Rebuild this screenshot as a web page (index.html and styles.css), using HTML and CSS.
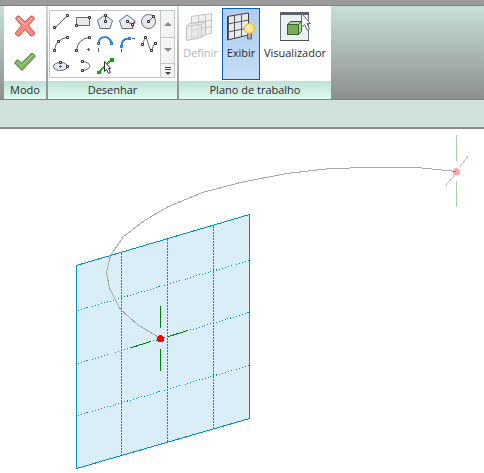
FILE: index.html
```html
<!DOCTYPE html>
<html lang="pt-br">
<head>
    <meta charset="UTF-8">
    <meta name="viewport" content="width=device-width, initial-scale=1.0">
    <title>Plano de trabalho</title>
    <link rel="stylesheet" href="styles.css">
</head>
<body>
    <div class="tabs-edge"></div>
    <div class="ribbon">
        <section class="panel panel-mode">
            <div class="panel-body">
                <button type="button" class="mode-button" aria-label="Cancelar">
                    <svg width="24" height="24" viewBox="0 0 24 24">
                        <path d="M2.500 4.500L4.500 2H6L12 8L18 2H19.500L21.500 4.500L15.500 11.500L21.500 19V20L19.500 22H18L12 15.500L6 22H4.500L2.500 20V19L8.500 11.500Z" fill="#ff8a82" stroke="#cf4a40"/>
                        <path d="M5 4L12 11L19 4" fill="none" stroke="#ffb8b2"/>
                    </svg>
                </button>
                <button type="button" class="mode-button" aria-label="Concluir">
                    <svg width="24" height="24" viewBox="0 0 24 24">
                        <path d="M1.500 13L4.500 9.500L8.500 13L19 3L22.500 6L9 20.500Z" fill="#82b565" stroke="#4d7d38"/>
                        <path d="M4 12L8.500 16L20 5" fill="none" stroke="#a4d088"/>
                    </svg>
                </button>
            </div>
            <h2>Modo</h2>
        </section>
        <section class="panel panel-draw">
            <div class="panel-body">
                <div class="gallery">
                    <div class="tools">
                        <button type="button" aria-label="Linha">
                            <svg viewBox="0 0 22 22"><path d="M5 17L17 5"/><g class="node"><path d="M3.500 15.500h2v2h-2zM16.500 3.500h2v2h-2z"/></g></svg>
                        </button>
                        <button type="button" aria-label="Retângulo">
                            <svg viewBox="0 0 22 22"><path class="solid" d="M4.500 6.500h13v8h-13z"/><g class="node"><path d="M3.500 13.500h2v2h-2zM16.500 5.500h2v2h-2z"/></g></svg>
                        </button>
                        <button type="button" aria-label="Polígono inscrito">
                            <svg viewBox="0 0 22 22"><path class="solid" d="M11 4L18.500 9.500L16 17.500H6L3.500 9.500Z"/><path d="M11.500 6v5"/><g class="node"><path d="M10.500 3.500h2v2h-2zM10.500 9.500h2v2h-2z"/></g></svg>
                        </button>
                        <button type="button" aria-label="Polígono circunscrito">
                            <svg viewBox="0 0 22 22"><path class="solid" d="M11 4L18.500 9.500L16 17.500H6L3.500 9.500Z"/><path class="red" d="M19 10L16 18"/><path d="M12 11L16 13"/><g class="node"><path d="M10.500 9.500h2v2h-2zM15.500 12.500h2v2h-2z"/></g></svg>
                        </button>
                        <button type="button" aria-label="Círculo">
                            <svg viewBox="0 0 22 22"><circle class="solid" cx="10.500" cy="10.500" r="7"/><path d="M11 10L15 6"/><g class="node"><path d="M9.500 9.500h2v2h-2zM14.500 4.500h2v2h-2z"/></g></svg>
                        </button>
                        <button type="button" aria-label="Arco por três pontos">
                            <svg viewBox="0 0 22 22"><path d="M4.500 17Q6 6 17 4.500"/><g class="node"><path d="M3.500 16.500h2v2h-2zM7.500 7.500h2v2h-2zM16.500 3.500h2v2h-2z"/></g></svg>
                        </button>
                        <button type="button" aria-label="Arco por centro">
                            <svg viewBox="0 0 22 22"><path d="M4.500 17Q6 6 17 4.500M15 16.500h3M16.500 15v3"/><g class="node"><path d="M3.500 16.500h2v2h-2zM16.500 3.500h2v2h-2z"/></g></svg>
                        </button>
                        <button type="button" aria-label="Arco tangente">
                            <svg viewBox="0 0 22 22"><path class="blue" d="M4.500 11C5 2 15 2 17.500 10"/><path d="M4.500 15v4"/><g class="blue-node"><path d="M3.500 9.500h2v2h-2zM16.500 9.500h2v2h-2z"/></g></svg>
                        </button>
                        <button type="button" aria-label="Arco de concordância">
                            <svg viewBox="0 0 22 22"><path class="blue" d="M5.500 13C5.500 8 8 5.500 13 5.500"/><path d="M16 5.500h3M5.500 16v3"/><g class="blue-node"><path d="M4.500 12.500h2v2h-2zM12.500 4.500h2v2h-2z"/></g></svg>
                        </button>
                        <button type="button" aria-label="Spline">
                            <svg viewBox="0 0 22 22"><path d="M4.500 11C6 9 6 5 8 5.500C10 7 11 17 13.500 16.500C15 16 15 11 17.500 10"/><g class="node"><path d="M3.500 10.500h2v2h-2zM6.500 3.500h2v2h-2zM12.500 16.500h2v2h-2zM16.500 9.500h2v2h-2z"/></g></svg>
                        </button>
                        <button type="button" aria-label="Elipse">
                            <svg viewBox="0 0 22 22"><ellipse class="solid" cx="10.500" cy="11.500" rx="7" ry="4"/><path d="M9 11.500h3M10.500 10v3"/><g class="node"><path d="M9.500 6.500h2v2h-2zM16.500 10.500h2v2h-2z"/></g></svg>
                        </button>
                        <button type="button" aria-label="Elipse parcial">
                            <svg viewBox="0 0 22 22"><path d="M11 6.500C20 8 20 14 11 15.500"/><g class="node"><path d="M9.500 5.500h2v2h-2zM9.500 14.500h2v2h-2z"/></g></svg>
                        </button>
                        <button type="button" aria-label="Selecionar linhas">
                            <svg viewBox="0 0 22 22"><path class="green" d="M5 17L17 5"/><path class="green-node" d="M3 16h4v3h-4zM16 3h4v4h-4z"/><path class="cursor" d="M10.500 6.500v10l2-2l2 4l2-1l-2-4h2z"/></svg>
                        </button>
                    </div>
                    <div class="scroller">
                        <button type="button" aria-label="Para cima"><svg viewBox="0 0 12 12"><path d="M2 8L6 4L10 8Z"/></svg></button>
                        <button type="button" aria-label="Para baixo"><svg viewBox="0 0 12 12"><path d="M2 4L6 8L10 4Z"/></svg></button>
                        <button type="button" class="more" aria-label="Mais"><svg viewBox="0 0 12 12"><path d="M3 2h6v1h-6zM3 4h6v1h-6zM3 7L6 10L9 7Z"/></svg></button>
                    </div>
                </div>
            </div>
            <h2>Desenhar</h2>
        </section>
        <section class="panel panel-plane">
            <div class="panel-body">
                <button type="button" class="large-button" disabled>
                    <svg width="32" height="32" viewBox="0 0 32 32">
                        <path d="M6.500 5.500L26.500 2.500V22L6.500 27Z" fill="#f0f0f0" stroke="#c4c4c4"/>
                        <path d="M13.500 5v20M20.500 4v19M6.500 12.500L26.500 9M6.500 19.500L26.500 15.500" fill="none" stroke="#c4c4c4"/>
                        <path d="M1.500 15.500L5 12.500L20.500 10.500V22.500L16.500 26.500L1.500 29.500Z" fill="#e2e2e2" fill-opacity=".6" stroke="#bdbdbd"/>
                        <path d="M1.500 15.500L16.500 13.500L20.500 10.500M16.500 13.500V26" fill="none" stroke="#c8c8c8"/>
                    </svg>
                    <span>Definir</span>
                </button>
                <button type="button" class="large-button active">
                    <svg width="32" height="32" viewBox="0 0 32 32">
                        <path d="M2.500 5.500L23.500 2V24L2.500 29Z" fill="#e6e9ee" stroke="#3c3c3c"/>
                        <path d="M3.500 6L3.500 28M9.500 5v22M16.500 4v21M2.500 13L23.500 9M2.500 21L23.500 17" fill="none" stroke="#5a5a5a"/>
                        <path d="M22.500 22h4v6h-4z" fill="#aaa" stroke="#666"/>
                        <circle cx="24.500" cy="17.500" r="5" fill="#ffe685" stroke="#eeb02c"/>
                        <circle cx="23" cy="16" r="2" fill="#fff6c8"/>
                    </svg>
                    <span>Exibir</span>
                </button>
                <button type="button" class="large-button">
                    <svg width="32" height="32" viewBox="0 0 32 32">
                        <path d="M1.500 1.500h28v28h-28z" fill="#edf0f3" stroke="#6a6f7a"/>
                        <path d="M1 1h29v3h-29z" fill="#5a5f6b"/>
                        <path d="M1 29h29v1h-29z" fill="#4a4f5b"/>
                        <path d="M8.500 13.500L11.500 10.500H22.500V20.500L19.500 23.500H8.500Z" fill="#b0d69a" stroke="#35632c"/>
                        <path d="M8.500 13.500H19.500V23.500H8.500Z" fill="#76ac5a" stroke="#35632c"/>
                        <path d="M19.500 13.500L22.500 10.500" stroke="#35632c"/>
                        <path d="M22.500 2.500V16.500L25.500 13.500L28.500 19.500L30.500 18L28 12.500H31.500Z" fill="#f4f4f4" stroke="#6a6a6a"/>
                    </svg>
                    <span>Visualizador</span>
                </button>
            </div>
            <h2>Plano de trabalho</h2>
        </section>
    </div>
    <div class="options-bar"></div>
    <main class="view">
        <svg class="drawing" viewBox="0 129 484 344" role="img" aria-label="Caminho e plano de trabalho">
            <!-- plano -->
            <path class="plane" d="M76.500 265.500L249.500 214.500V418.500L76.500 468.500Z"/>
            <path class="grid" d="M121.500 253V455M167.500 239V442M213.500 226V429"/>
            <path class="grid-slope" d="M78 310.500L249 260.500M78 363.500L249 312.500M78 415.500L249 365.500"/>
            <!-- caminho -->
            <path class="path" d="M160.500 338.500L137.500 324.500L120.500 309.500L109.500 288.500L106.500 272.500L110.500 255.500L123.500 236.500L144.500 220.500L168.500 206.500L202.500 192.500L240.500 182.500L286.500 173.500L330.500 168.500L370.500 167.500L417.500 167.500L456.500 171.500"/>
            <path class="axis" d="M160.500 306V328M160.500 349V371M131 347.500L151 341.500M168 336.500L188 330.500"/>
            <circle class="point" cx="160.500" cy="338.500" r="3.500"/>
            <g class="faded">
                <path class="axis" d="M456.500 135V161M456.500 181V207M446 185.500L454 175.500M460 166.500L468 156.500"/>
                <circle class="point" cx="456.500" cy="171.500" r="3.500"/>
            </g>
        </svg>
    </main>
</body>
</html>
```
FILE: styles.css
```css
* {
    box-sizing: border-box;
}
body {
    margin: 0;
    min-height: 100vh;
    display: flex;
    flex-direction: column;
    background-color: #fff;
    font-family: "Open Sans", "Noto Sans", sans-serif;
    font-size: 11px;
    color: #2b2b2b;
}
button {
    margin: 0;
    padding: 0;
    border: none;
    background: none;
    font: inherit;
    color: inherit;
}
svg {
    display: block;
}
.tabs-edge {
    height: 5px;
    background-color: #9b9b9b;
}
.ribbon {
    display: flex;
    gap: 2px;
    height: 95px;
    padding-left: 4px;
    border-top: 1px solid #22b573;
    border-bottom: 1px solid #22b573;
    background: linear-gradient(#c8dfd6, #8c8f8e);
}
.panel {
    display: flex;
    flex-direction: column;
    background-color: #fff;
}
.panel-mode {
    width: 42px;
}
.panel-draw {
    width: 129px;
}
.panel-plane {
    width: 152px;
}
.panel-body {
    flex: 1;
    display: flex;
}
.panel h2 {
    margin: 0;
    height: 18px;
    font-size: 11px;
    font-weight: 400;
    line-height: 18px;
    text-align: center;
    background: linear-gradient(#bfe0d5, #dffbf1);
}
.panel-mode .panel-body {
    flex-direction: column;
    align-items: center;
    gap: 12px;
    padding-top: 8px;
}
.gallery {
    display: flex;
    height: 68px;
    margin: 4px 0 0 1px;
    border: 1px solid #c4c8c8;
}
.tools {
    display: grid;
    grid-template-columns: repeat(5, 22px);
    grid-auto-rows: 22px;
}
.tools svg {
    width: 22px;
    height: 22px;
    fill: none;
    stroke: #5a5e68;
}
.tools .solid {
    fill: #e6e9ed;
    stroke: #666b76;
}
.tools .node {
    fill: #fff;
    stroke: #2c2c30;
}
.tools .red {
    stroke: #f00;
    stroke-dasharray: 3 1;
}
.tools .blue {
    stroke: #2a84d2;
    stroke-width: 2;
}
.tools .blue-node {
    fill: #9ccbf2;
    stroke: #0e6ac0;
}
.tools .green {
    stroke: #1eb414;
    stroke-width: 2;
}
.tools .green-node {
    fill: #0ca808;
    stroke: none;
}
.tools .cursor {
    fill: #fff;
    stroke: #333;
}
.scroller {
    width: 14px;
    display: flex;
    flex-direction: column;
}
.scroller button {
    flex: 1;
    display: flex;
    align-items: center;
    justify-content: center;
    border-left: 1px solid #c4c8c8;
    background-color: #f3f4f4;
}
.scroller button + button {
    border-top: 1px solid #c4c8c8;
}
.scroller .more {
    flex: none;
    height: 14px;
}
.scroller svg {
    width: 12px;
    height: 12px;
    fill: #8c8c8c;
}
.scroller .more svg {
    fill: #444;
}
.large-button {
    display: flex;
    flex-direction: column;
    align-items: center;
    width: 70px;
    height: 72px;
    margin-top: 2px;
    padding-top: 2px;
    border: 1px solid transparent;
}
.large-button span {
    line-height: 20px;
}
.large-button:disabled {
    width: 43px;
    color: #b5b5b5;
}
.large-button.active {
    width: 38px;
    border-color: #0a5fb4;
    background: linear-gradient(#b0cdf0, #c5ddf8);
}
.options-bar {
    height: 29px;
    border-bottom: 2px solid #858987;
    background-color: #d0e2db;
}
.view {
    flex: 1;
}
.drawing {
    width: 100%;
    fill: none;
    shape-rendering: crispEdges;
}
.plane {
    fill: #daeef7;
    stroke: #0090c8;
}
.grid,
.grid-slope {
    stroke: #0090c8;
    stroke-dasharray: 1 2;
}
.grid {
    stroke-dasharray: 2 1;
}
.path {
    stroke: #a8a8a8;
}
.axis {
    stroke: #008000;
}
.point {
    fill: #f00;
}
.faded {
    opacity: 0.35;
}
```
